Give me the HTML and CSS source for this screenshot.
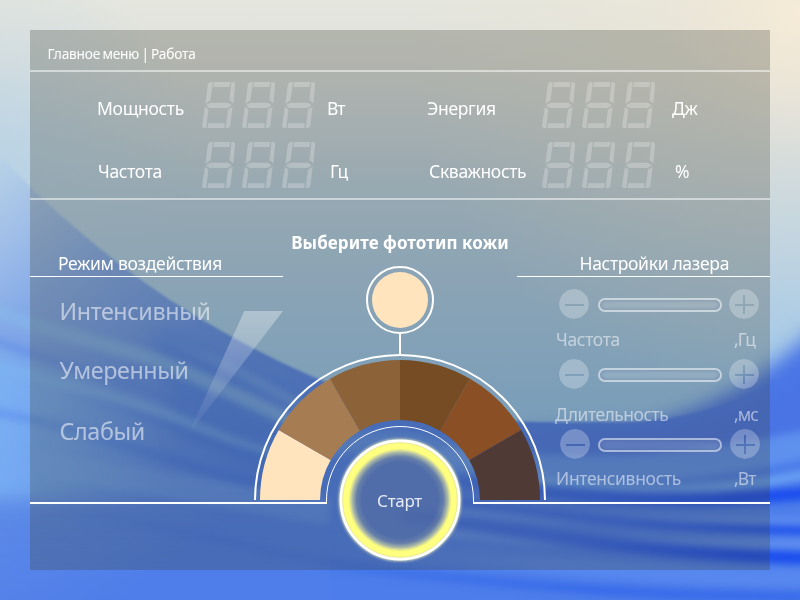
FILE: index.html
```html
<!DOCTYPE html>
<html lang="ru">
<head>
<meta charset="utf-8">
<title>Главное меню | Работа</title>
<link rel="stylesheet" href="styles.css">
</head>
<body>
<svg class="wallpaper" viewBox="0 0 800 600" aria-hidden="true">
  <defs>
    <linearGradient id="sky" x1="0" y1="0" x2="0" y2="1">
      <stop offset="0" stop-color="#e5e6de"/>
      <stop offset=".1" stop-color="#dfe1dc"/>
      <stop offset=".2" stop-color="#cfdadf"/>
      <stop offset=".32" stop-color="#bad1e2"/>
      <stop offset=".45" stop-color="#abcbe6"/>
      <stop offset=".6" stop-color="#9cc6ea"/>
      <stop offset=".72" stop-color="#8fc0ee"/>
    </linearGradient>
    <radialGradient id="warm" gradientUnits="userSpaceOnUse" cx="800" cy="10" r="400">
      <stop offset="0" stop-color="#f5ebd7"/>
      <stop offset=".35" stop-color="#efe6d4" stop-opacity=".45"/>
      <stop offset="1" stop-color="#ede6d4" stop-opacity="0"/>
    </radialGradient>
    <radialGradient id="cool" gradientUnits="userSpaceOnUse" cx="0" cy="160" r="200">
      <stop offset="0" stop-color="#b4d2e8" stop-opacity=".6"/>
      <stop offset="1" stop-color="#b4d2e8" stop-opacity="0"/>
    </radialGradient>
    <linearGradient id="sea" gradientUnits="userSpaceOnUse" x1="0" y1="150" x2="260" y2="500">
      <stop offset="0" stop-color="#bad3e6"/>
      <stop offset=".16" stop-color="#a2c0e8"/>
      <stop offset=".32" stop-color="#86abe8"/>
      <stop offset=".6" stop-color="#618ee6"/>
      <stop offset="1" stop-color="#4c7dea"/>
    </linearGradient>
    <linearGradient id="edge" gradientUnits="userSpaceOnUse" x1="0" y1="0" x2="170" y2="0">
      <stop offset="0" stop-color="#7cb4f6"/>
      <stop offset="1" stop-color="#7cb4f6" stop-opacity="0"/>
    </linearGradient>
    <linearGradient id="deep" gradientUnits="userSpaceOnUse" x1="0" y1="490" x2="0" y2="600">
      <stop offset="0" stop-color="#5580ea" stop-opacity="0"/>
      <stop offset="1" stop-color="#5580ea"/>
    </linearGradient>
    <linearGradient id="darkleft" gradientUnits="userSpaceOnUse" x1="60" y1="0" x2="260" y2="0">
      <stop offset="0" stop-color="#3c70e4" stop-opacity="0"/>
      <stop offset="1" stop-color="#3c70e4"/>
    </linearGradient>
    <linearGradient id="pale" gradientUnits="userSpaceOnUse" x1="150" y1="0" x2="250" y2="0">
      <stop offset="0" stop-color="#78a8ea" stop-opacity="0"/>
      <stop offset="1" stop-color="#78a8ea"/>
    </linearGradient>
    <linearGradient id="darkfade" gradientUnits="userSpaceOnUse" x1="380" y1="0" x2="740" y2="0">
      <stop offset="0" stop-color="#3565e2" stop-opacity=".35"/>
      <stop offset="1" stop-color="#1c4eee"/>
    </linearGradient>
    <linearGradient id="lightfade" gradientUnits="userSpaceOnUse" x1="320" y1="0" x2="560" y2="0">
      <stop offset="0" stop-color="#5b8af0" stop-opacity="0"/>
      <stop offset="1" stop-color="#5b8af0"/>
    </linearGradient>
    <linearGradient id="lowfade" gradientUnits="userSpaceOnUse" x1="300" y1="0" x2="600" y2="0">
      <stop offset="0" stop-color="#2e60ee" stop-opacity="0"/>
      <stop offset="1" stop-color="#2e60ee"/>
    </linearGradient>
    <filter id="b1" color-interpolation-filters="sRGB"><feGaussianBlur stdDeviation="1.2"/></filter>
    <filter id="b4" color-interpolation-filters="sRGB" filterUnits="userSpaceOnUse" x="-40" y="-40" width="880" height="680"><feGaussianBlur stdDeviation="3.6"/></filter>
    <filter id="b10" color-interpolation-filters="sRGB" filterUnits="userSpaceOnUse" x="-90" y="-60" width="950" height="720"><feGaussianBlur stdDeviation="10"/></filter>
  </defs>
  <rect width="800" height="600" fill="url(#sky)"/>
  <rect width="800" height="600" fill="url(#warm)"/>
  <rect width="800" height="600" fill="url(#cool)"/>
  <path d="M620 440C700 415 765 380 830 315V460Z" fill="#4d78e6" filter="url(#b10)"/>
  <path d="M-10 146C50 210 110 260 170 300C230 338 300 376 380 402C430 419 520 424 600 422C680 425 740 405 810 362V610H-10Z" fill="url(#sea)" filter="url(#b1)"/>
  <path d="M450 440C560 432 620 432 660 424C730 410 770 390 830 345V430L700 462Z" fill="#4a74e4" filter="url(#b10)"/>
  <path d="M-60 340L170 400V500L-60 500Z" fill="url(#edge)" opacity=".8" filter="url(#b10)"/>
  <path d="M150 330C230 350 280 390 320 410L300 500L180 440Z" fill="#4678e2" opacity=".5" filter="url(#b10)"/>
  <g fill="none" filter="url(#b4)">
    <path d="M-30 300C40 335 120 342 190 374S260 405 300 425" stroke="#86b8ea" stroke-width="14" opacity=".6"/>
    <path d="M150 335C230 362 260 385 300 405" stroke="url(#pale)" stroke-width="9" opacity=".55"/>
    <path d="M-30 358C50 382 130 398 190 424S250 448 300 462" stroke="#80b6f0" stroke-width="10" opacity=".5"/>
    <path d="M-30 330C60 368 130 380 190 408S250 432 290 445" stroke="#4c7ce4" stroke-width="8" opacity=".35"/>
    <path d="M-30 408C70 424 120 445 180 460S260 484 300 492" stroke="#4a7ce8" stroke-width="9" opacity=".35"/>
    <path d="M60 392C150 410 200 442 290 464" stroke="url(#darkleft)" stroke-width="8" opacity=".7"/>
    <path d="M90 440C150 448 200 475 290 490" stroke="url(#darkleft)" stroke-width="9" opacity=".65"/>
    <path d="M-30 458C90 468 180 490 330 512" stroke="#78aaf0" stroke-width="26" opacity=".35"/>
    <path d="M60 510C170 522 250 556 420 574S640 598 840 600" stroke="url(#darkleft)" stroke-width="8" opacity=".55"/>
    <path d="M320 452C400 425 440 450 540 480" stroke="#6ea4ee" stroke-width="18" opacity=".45"/>
    <path d="M440 462C560 474 680 477 840 436" stroke="#6a9ef2" stroke-width="28" opacity=".6"/>
    <path d="M530 480C640 496 740 493 840 466" stroke="#72acf6" stroke-width="9" opacity=".75"/>
    <path d="M440 476C560 497 680 508 840 490" stroke="url(#darkfade)" stroke-width="13"/>
    <path d="M440 510C560 522 690 522 840 519" stroke="#628ff0" stroke-width="8" opacity=".75"/>
    <path d="M440 500C560 518 680 530 840 531" stroke="url(#darkfade)" stroke-width="7"/>
    <path d="M440 531C560 545 690 546 840 544" stroke="#6492f0" stroke-width="11" opacity=".75"/>
    <path d="M400 514C520 532 660 558 840 558" stroke="url(#darkfade)" stroke-width="13"/>
    <path d="M330 546C480 558 660 580 840 578" stroke="url(#lightfade)" stroke-width="18" opacity=".75"/>
    <path d="M300 568C440 572 560 597 840 596" stroke="url(#lowfade)" stroke-width="8" opacity=".6"/>
  </g>
  <rect y="490" width="330" height="110" fill="url(#deep)" opacity=".4"/>
</svg>

<svg class="symbols" aria-hidden="true">
  <symbol id="digit" viewBox="0 0 34 46">
    <path d="M12 0H28.4L27.6 5H11.4Z"/>
    <path d="M5.8 2.6Q6.4 0 9 0H11L8.4 18.6L3.4 21.8Z"/>
    <path d="M29.4 0H31Q33.4 .3 33.1 2.4L31.4 21.4L27.4 18Z"/>
    <path d="M4 23.3L8.2 20.7H26L29.8 23.3L25.6 26H7.2Z"/>
    <path d="M3 24.8L6.4 27.4L4.4 46H2Q0 46 0 44Z"/>
    <path d="M30.6 24.8L28.4 43.6Q28 46 25.8 46H23.6L26 27.4Z"/>
    <path d="M6.2 41.2H22.8L22.3 46H5.6Z"/>
  </symbol>
</svg>

<main class="panel">
  <header class="crumbs">Главное меню&nbsp;| Работа</header>

  <section class="readouts">
    <div class="row top">
      <span class="label">Мощность</span>
      <span class="digits"><svg><use href="#digit"/></svg><svg><use href="#digit"/></svg><svg><use href="#digit"/></svg></span>
      <span class="unit">Вт</span>
      <span class="label">Энергия</span>
      <span class="digits"><svg><use href="#digit"/></svg><svg><use href="#digit"/></svg><svg><use href="#digit"/></svg></span>
      <span class="unit">Дж</span>
    </div>
    <div class="row bottom">
      <span class="label">Частота</span>
      <span class="digits"><svg><use href="#digit"/></svg><svg><use href="#digit"/></svg><svg><use href="#digit"/></svg></span>
      <span class="unit">Гц</span>
      <span class="label">Скважность</span>
      <span class="digits"><svg><use href="#digit"/></svg><svg><use href="#digit"/></svg><svg><use href="#digit"/></svg></span>
      <span class="unit">%</span>
    </div>
  </section>

  <section class="stage">
    <svg class="dial" viewBox="30 200 740 370" aria-hidden="true">
      <defs>
        <linearGradient id="wedge" x1="0" y1="0" x2="0" y2="1">
          <stop offset="0" stop-color="#fff" stop-opacity=".34"/>
          <stop offset="1" stop-color="#fff" stop-opacity=".01"/>
        </linearGradient>
        <radialGradient id="glow" gradientUnits="userSpaceOnUse" cx="400" cy="500" r="51">
          <stop offset=".74" stop-color="#ffff9a" stop-opacity="0"/>
          <stop offset=".85" stop-color="#ffffa0" stop-opacity=".12"/>
          <stop offset=".93" stop-color="#ffffa0" stop-opacity=".5"/>
          <stop offset="1" stop-color="#ffff90" stop-opacity=".95"/>
        </radialGradient>
        <filter id="halo"><feGaussianBlur stdDeviation="1.8"/></filter>
      </defs>
      <path d="M244.3 311H283L188 435Z" fill="url(#wedge)"/>
      <circle cx="400" cy="300" r="33" fill="none" stroke="#fff" stroke-width="2"/>
      <circle cx="400" cy="300" r="28" fill="#ffe4bd"/>
      <path d="M400 334V354" stroke="#fff" stroke-width="2"/>
      <path d="M255 500A145 145 0 0 1 545 500" fill="none" stroke="#fff" stroke-width="2"/>
      <path d="M260 500A140 140 0 0 1 278.76 430L330.72 460A80 80 0 0 0 320 500Z" fill="#ffe4bd"/>
      <path d="M278.76 430A140 140 0 0 1 330 378.76L360 430.72A80 80 0 0 0 330.72 460Z" fill="#a67c52"/>
      <path d="M330 378.76A140 140 0 0 1 400 360V420A80 80 0 0 0 360 430.72Z" fill="#8c6239"/>
      <path d="M400 360A140 140 0 0 1 470 378.76L440 430.72A80 80 0 0 0 400 420Z" fill="#754c24"/>
      <path d="M470 378.76A140 140 0 0 1 521.24 430L469.28 460A80 80 0 0 0 440 430.72Z" fill="#8a4f24"/>
      <path d="M521.24 430A140 140 0 0 1 540 500H480A80 80 0 0 0 469.28 460Z" fill="#503a36"/>
      <path d="M326.5 502V500A73.5 73.5 0 0 1 473.5 500V502" fill="none" stroke="#fff"/>
      <path d="M30 503H327M473 503H770" stroke="#fff" stroke-width="2"/>
      <circle cx="400" cy="500" r="59" fill="none" stroke="#ffffc0" stroke-width="3.5" filter="url(#halo)"/>
      <circle cx="400" cy="500" r="52" fill="#687088" fill-opacity=".28"/>
      <circle cx="400" cy="500" r="51" fill="url(#glow)"/>
      <circle cx="400" cy="500" r="54" fill="none" stroke="#ffff80" stroke-width="8"/>
      <circle cx="400" cy="500" r="59" fill="none" stroke="#fff" stroke-width="2.8"/>
      <circle cx="400" cy="500" r="57.4" fill="none" stroke="#e4e498" stroke-width=".8"/>
      <circle cx="400" cy="500" r="50.6" fill="none" stroke="#e2e288" stroke-width=".8"/>
    </svg>

    <div class="modes">
      <h2>Режим воздействия</h2>
      <ul>
        <li>Интенсивный</li>
        <li>Умеренный</li>
        <li>Слабый</li>
      </ul>
    </div>

    <div class="picker">
      <h1>Выберите фототип кожи</h1>
      <button class="start">Старт</button>
    </div>

    <div class="laser">
      <h2>Настройки лазера</h2>
      <div class="control">
        <span class="knob minus"></span><span class="track"></span><span class="knob plus"></span>
      </div>
      <div class="caption first"><span>Частота</span><span>,Гц</span></div>
      <div class="control">
        <span class="knob minus"></span><span class="track"></span><span class="knob plus"></span>
      </div>
      <div class="caption second"><span>Длительность</span><span>,мс</span></div>
      <div class="control shifted">
        <span class="knob minus"></span><span class="track"></span><span class="knob plus"></span>
      </div>
      <div class="caption third"><span>Интенсивность</span><span>,Вт</span></div>
    </div>
  </section>
</main>
</body>
</html>
```
FILE: styles.css
```css
* {
  box-sizing: border-box;
  margin: 0;
  padding: 0;
}

body {
  width: 800px;
  height: 600px;
  padding: 30px;
  overflow: hidden;
  position: relative;
  color: #fff;
  font: 17.5px/24px "Noto Sans", "Open Sans", sans-serif;
  letter-spacing: -0.32px;
}

.wallpaper {
  position: absolute;
  left: 0;
  top: 0;
  width: 800px;
  height: 600px;
}

.symbols {
  position: absolute;
  width: 0;
  height: 0;
}

.panel {
  position: relative;
  width: 740px;
  height: 540px;
  background: rgba(60, 65, 55, 0.28);
}

.crumbs {
  height: 42px;
  padding: 14px 0 0 17.5px;
  border-bottom: 2px solid rgba(255, 255, 255, 0.5);
  font-size: 13.7px;
  line-height: 20px;
  letter-spacing: -0.2px;
  word-spacing: -1px;
}

.readouts {
  height: 128px;
  padding-top: 3px;
  border-bottom: 2px solid rgba(255, 255, 255, 0.5);
}

.row {
  display: grid;
  grid-template-columns: 105px 125px 100px 115px 130px 60px;
  height: 60px;
  padding-left: 67px;
  align-items: center;
}

.row .label,
.row .unit {
  padding-top: 6px;
}

.row .unit:nth-child(3) {
  letter-spacing: -1px;
}

.row.bottom .label,
.row.bottom .unit {
  padding: 12px 0 0 3px;
}

.row.bottom .label {
  padding-left: 1px;
}

.row.bottom .label:nth-child(4) {
  padding-left: 2px;
}

.digits {
  display: flex;
  gap: 6px;
  height: 46px;
}

.digits svg {
  width: 34px;
  height: 46px;
  fill: rgba(255, 255, 255, 0.23);
}

.stage {
  position: relative;
  display: grid;
  grid-template-columns: 253px 234px 253px;
  height: 370px;
}

.dial {
  position: absolute;
  left: 0;
  top: 0;
  width: 740px;
  height: 370px;
}

.modes,
.picker,
.laser {
  position: relative;
}

h2 {
  height: 77px;
  padding-top: 50.5px;
  border-bottom: 1px solid #fff;
  font-size: 17.5px;
  font-weight: normal;
}

.modes h2 {
  padding-left: 28px;
}

.laser h2 {
  padding-left: 62.5px;
}

.modes ul {
  list-style: none;
  padding: 4px 0 0 29.5px;
  font-size: 23.3px;
  line-height: 60px;
  letter-spacing: -0.38px;
  color: rgba(255, 255, 255, 0.54);
}

.modes li:nth-child(2) {
  margin: -1px 0 1px;
}

h1 {
  padding-top: 31px;
  font-size: 17px;
  line-height: 24px;
  letter-spacing: 0.05px;
  text-align: center;
}

.picker {
  display: flex;
  flex-direction: column;
  align-items: center;
}

.start {
  width: 100px;
  height: 100px;
  margin-top: 196px;
  padding-right: 1px;
  border: 0;
  border-radius: 50%;
  background: none;
  color: rgba(255, 255, 255, 0.86);
  font: 17px/24px "Noto Sans", "Open Sans", sans-serif;
  letter-spacing: -0.3px;
}

.control {
  display: flex;
  align-items: center;
  gap: 9px;
  height: 30px;
  margin-left: 42px;
}

.laser h2 + .control {
  margin-top: 12px;
}

.knob {
  width: 30px;
  height: 30px;
  border-radius: 50%;
  background: rgba(255, 255, 255, 0.26);
}

/* The signs are cut out of the discs so that the wallpaper shows through. */
.minus {
  mask:
    linear-gradient(#000, #000) 6px 15px / 19px 2px no-repeat exclude,
    linear-gradient(#000, #000);
}

.plus {
  margin-left: -2px;
  mask:
    linear-gradient(#000, #000) 6px 15px / 19px 2px no-repeat exclude,
    linear-gradient(#000, #000) 14px 6px / 2px 9px no-repeat exclude,
    linear-gradient(#000, #000) 14px 17px / 2px 8px no-repeat exclude,
    linear-gradient(#000, #000);
}

.track {
  width: 124px;
  height: 14px;
  margin-top: 2px;
  border: 2px solid rgba(255, 255, 255, 0.53);
  border-radius: 7px;
  background: rgba(255, 255, 255, 0.14);
  background-clip: padding-box;
  box-shadow: inset 0 0 4px rgba(50, 70, 120, 0.35);
}

.shifted {
  margin-left: 43px;
}

.shifted .track {
  margin-left: -1px;
}

.shifted .plus {
  margin-left: -1px;
}

.caption {
  display: flex;
  height: 24px;
  color: rgba(255, 255, 255, 0.52);
}

.caption span:first-child {
  width: 178px;
}

.caption span:last-child {
  letter-spacing: -0.9px;
}

.caption.first {
  margin: 8px 0 8px 39px;
}

.caption.second {
  margin: 13px 0 3px 38px;
  letter-spacing: -0.5px;
}

.caption.second span:first-child {
  width: 179px;
}

.caption.third {
  margin: 7px 0 0 39px;
}
```
